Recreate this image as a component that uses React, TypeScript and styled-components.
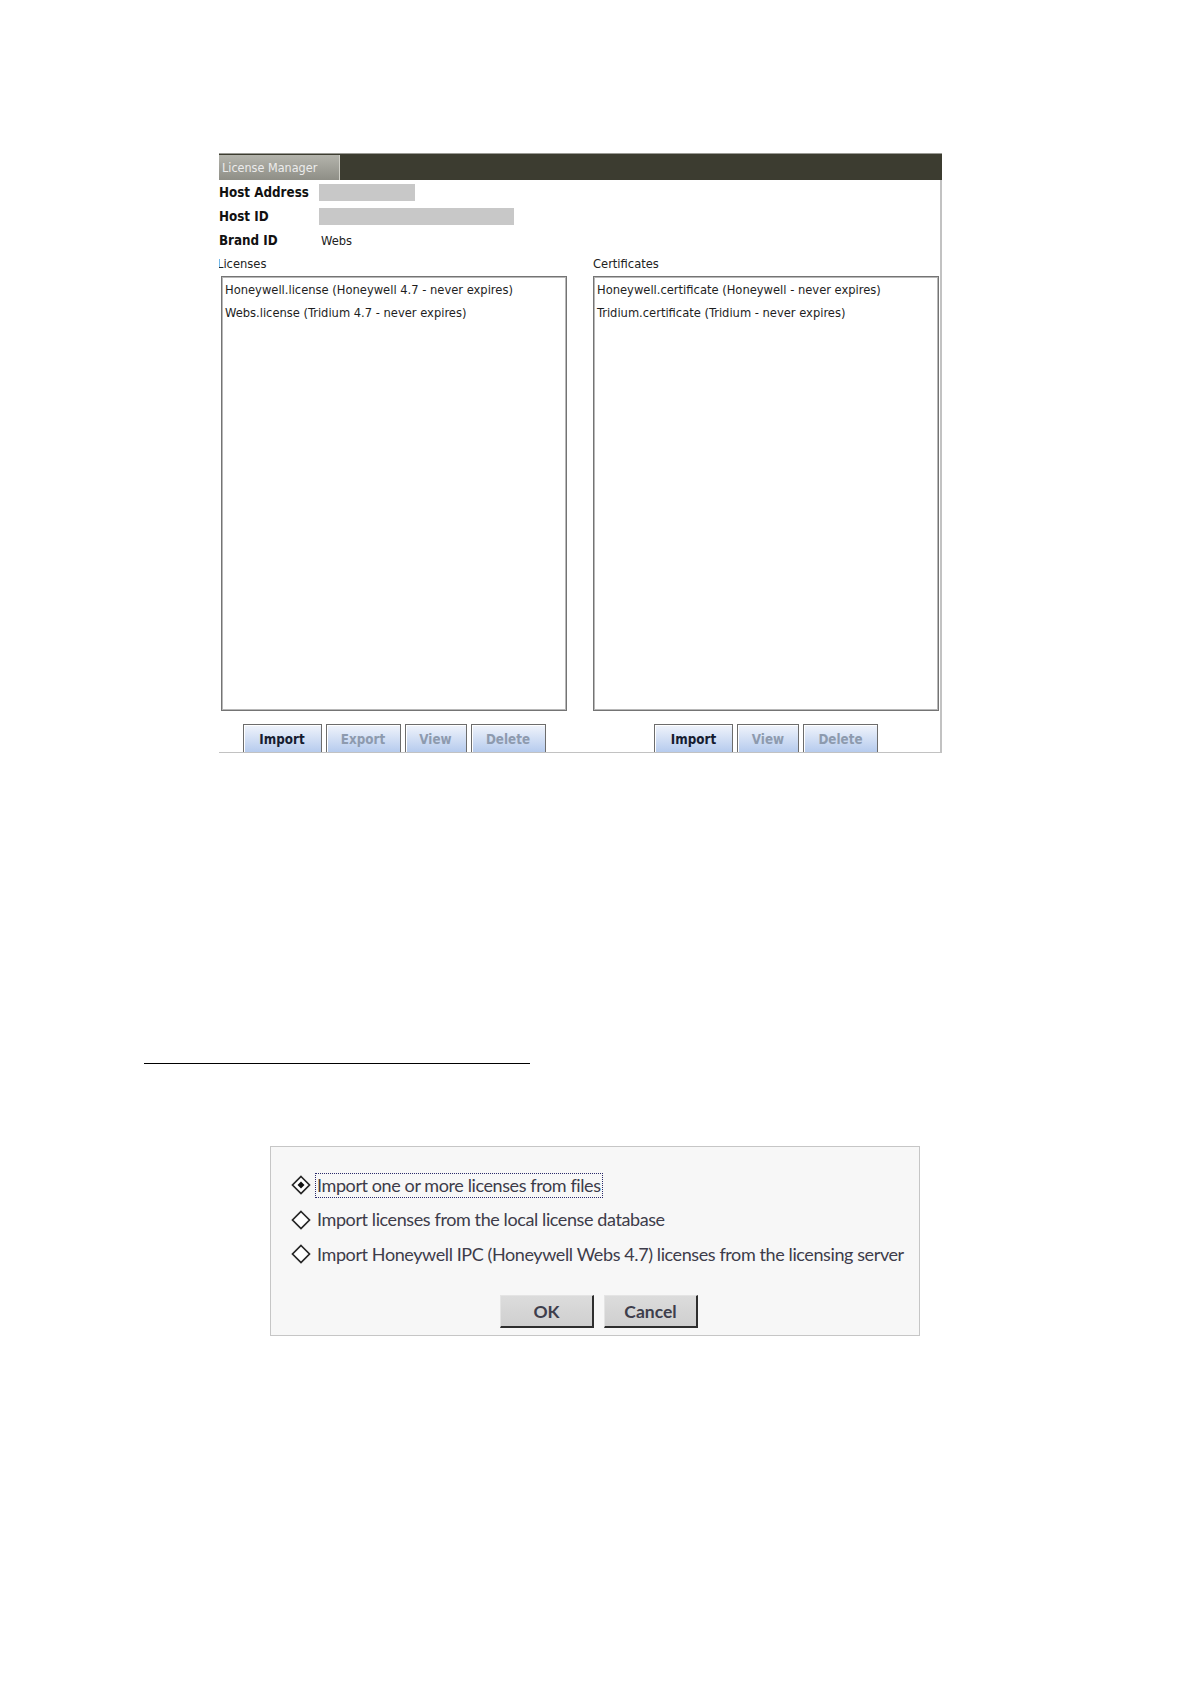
import React from "react";
import styled, { createGlobalStyle } from "styled-components";

const GlobalStyle = createGlobalStyle`
  html, body {
    margin: 0;
    padding: 0;
    background: #ffffff;
  }
  body {
    font-family: "DejaVu Sans Condensed", "DejaVu Sans", sans-serif;
  }
`;

const Page = styled.div`
  width: 1191px;
  height: 1685px;
  padding-top: 153px;
  box-sizing: border-box;
  display: flex;
  flex-direction: column;
`;

// ---------- License Manager window ----------

const Window = styled.div`
  margin-left: 219px;
  width: 723px;
  display: flex;
  flex-direction: column;
  font-family: "DejaVu Sans Condensed", "DejaVu Sans", sans-serif;
  font-size: 12.8px;
  color: #1a1a1a;
`;

const TitleBar = styled.div`
  height: 27px;
  background: #3c3c30;
  border-top: 1px solid #9a9a94;
  box-sizing: border-box;
  display: flex;
  align-items: flex-end;
`;

const Tab = styled.div`
  width: 121px;
  height: 25px;
  box-sizing: border-box;
  padding-left: 3px;
  display: flex;
  align-items: center;
  background: linear-gradient(#b4b4ac, #8e8e86);
  border-right: 1px solid #d0d0c8;
  color: #ececec;
  font-size: 12.5px;
`;

const Body = styled.div`
  display: flex;
  flex-direction: column;
  background: #ffffff;
  border-right: 2px solid #c2c2c2;
  border-bottom: 1px solid #c2c2c2;
  overflow: hidden;
`;

const InfoGrid = styled.div`
  display: grid;
  grid-template-columns: 100px 1fr;
  grid-auto-rows: 24px;
  align-items: center;
`;

const InfoLabel = styled.div`
  font-weight: bold;
  font-size: 13.3px;
  color: #111;
`;

const Redacted = styled.div<{ $w: number }>`
  width: ${(p) => p.$w}px;
  height: 17px;
  background: #c8c8c8;
`;

const InfoValue = styled.div`
  padding-left: 2px;
  color: #222;
`;

const Columns = styled.div`
  display: grid;
  grid-template-columns: 346px 346px;
  column-gap: 26px;
  padding-left: 2px;
`;

const Column = styled.div`
  display: flex;
  flex-direction: column;
`;

const SectionLabel = styled.div<{ $clipped?: boolean }>`
  height: 24px;
  line-height: 24px;
  margin-left: ${(p) => (p.$clipped ? "-4px" : "0")};
  color: #222;
`;

const ListBox = styled.div`
  height: 435px;
  box-sizing: border-box;
  border: 1px solid #747474;
  box-shadow: inset 0 0 0 1px #b8b8b8;
  padding: 2px 3px;
  display: flex;
  flex-direction: column;
`;

const ListItem = styled.div`
  height: 22.5px;
  line-height: 22.5px;
  color: #1e1e1e;
  white-space: nowrap;
`;

const ButtonRow = styled.div`
  height: 41px;
  display: flex;
  justify-content: center;
  align-items: flex-end;
  gap: 4px;
`;

const BlueButton = styled.div<{ $w: number; $enabled?: boolean }>`
  width: ${(p) => p.$w}px;
  height: 28px;
  box-sizing: border-box;
  border: 1px solid #6c6c6c;
  border-bottom: none;
  box-shadow: inset 1px 1px 0 #ffffff;
  background: linear-gradient(#f0f4fb, #b6cbee);
  display: flex;
  align-items: center;
  justify-content: center;
  padding-top: 1px;
  font-weight: bold;
  font-size: 13.3px;
  color: ${(p) => (p.$enabled ? "#161c30" : "#8d9aae")};
`;

// ---------- separator ----------

const Rule = styled.div`
  margin-top: 310px;
  margin-left: 144px;
  width: 386px;
  height: 1px;
  background: #000;
`;

// ---------- import dialog ----------

const Dialog = styled.div`
  margin-top: 82px;
  margin-left: 270px;
  width: 650px;
  height: 190px;
  box-sizing: border-box;
  border: 1px solid #c6c6c6;
  background: #f7f7f7;
  padding: 25px 0 0 20px;
  display: flex;
  flex-direction: column;
  font-family: Lato, "Open Sans", sans-serif;
  color: #3d3c4a;
`;

const Options = styled.div`
  display: flex;
  flex-direction: column;
  gap: 8.5px;
`;

const Option = styled.div`
  height: 26px;
  display: flex;
  align-items: center;
  gap: 4px;
`;

const OptionText = styled.span<{ $focused?: boolean }>`
  font-size: 18px;
  letter-spacing: -0.4px;
  padding: 0 1px 1px 1px;
  border: 1px dotted ${(p) => (p.$focused ? "#2a2a6a" : "transparent")};
  white-space: nowrap;
`;

const DialogButtons = styled.div`
  margin-top: 28px;
  display: flex;
  justify-content: center;
  gap: 10px;
  padding-right: 12px;
`;

const GrayButton = styled.div`
  width: 94px;
  height: 33px;
  box-sizing: border-box;
  border-top: 1px solid #e4e4e4;
  border-left: 1px solid #e4e4e4;
  border-right: 2px solid #2e2e2e;
  border-bottom: 2px solid #2e2e2e;
  background: linear-gradient(#dcdcdc, #cfcfcf);
  display: flex;
  align-items: center;
  justify-content: center;
  font-weight: bold;
  font-size: 17.5px;
  color: #3e3e4c;
`;

const Diamond = ({ selected }: { selected?: boolean }) => (
  <svg width="20" height="20" viewBox="0 0 20 20">
    <polygon points="10,1.5 18.5,10 10,18.5 1.5,10" fill="#ffffff" stroke="#262626" strokeWidth="1.7" />
    {selected && <polygon points="10,6.5 13.5,10 10,13.5 6.5,10" fill="#111" />}
  </svg>
);

const licenses = [
  "Honeywell.license (Honeywell 4.7 - never expires)",
  "Webs.license (Tridium 4.7 - never expires)",
];

const certificates = [
  "Honeywell.certificate (Honeywell - never expires)",
  "Tridium.certificate (Tridium - never expires)",
];

const importOptions = [
  "Import one or more licenses from files",
  "Import licenses from the local license database",
  "Import Honeywell IPC (Honeywell Webs 4.7) licenses from the licensing server",
];

export default function App() {
  return (
    <Page>
      <GlobalStyle />
      <Window>
        <TitleBar>
          <Tab>License Manager</Tab>
        </TitleBar>
        <Body>
          <InfoGrid>
            <InfoLabel>Host Address</InfoLabel>
            <Redacted $w={96} />
            <InfoLabel>Host ID</InfoLabel>
            <Redacted $w={195} />
            <InfoLabel>Brand ID</InfoLabel>
            <InfoValue>Webs</InfoValue>
          </InfoGrid>
          <Columns>
            <Column>
              <SectionLabel $clipped>Licenses</SectionLabel>
              <ListBox>
                {licenses.map((l) => (
                  <ListItem key={l}>{l}</ListItem>
                ))}
              </ListBox>
              <ButtonRow>
                <BlueButton $w={79} $enabled>Import</BlueButton>
                <BlueButton $w={75}>Export</BlueButton>
                <BlueButton $w={62}>View</BlueButton>
                <BlueButton $w={75}>Delete</BlueButton>
              </ButtonRow>
            </Column>
            <Column>
              <SectionLabel>Certificates</SectionLabel>
              <ListBox>
                {certificates.map((c) => (
                  <ListItem key={c}>{c}</ListItem>
                ))}
              </ListBox>
              <ButtonRow>
                <BlueButton $w={79} $enabled>Import</BlueButton>
                <BlueButton $w={62}>View</BlueButton>
                <BlueButton $w={75}>Delete</BlueButton>
              </ButtonRow>
            </Column>
          </Columns>
        </Body>
      </Window>

      <Rule />

      <Dialog>
        <Options>
          {importOptions.map((o, i) => (
            <Option key={o}>
              <Diamond selected={i === 0} />
              <OptionText $focused={i === 0}>{o}</OptionText>
            </Option>
          ))}
        </Options>
        <DialogButtons>
          <GrayButton>OK</GrayButton>
          <GrayButton>Cancel</GrayButton>
        </DialogButtons>
      </Dialog>
    </Page>
  );
}
